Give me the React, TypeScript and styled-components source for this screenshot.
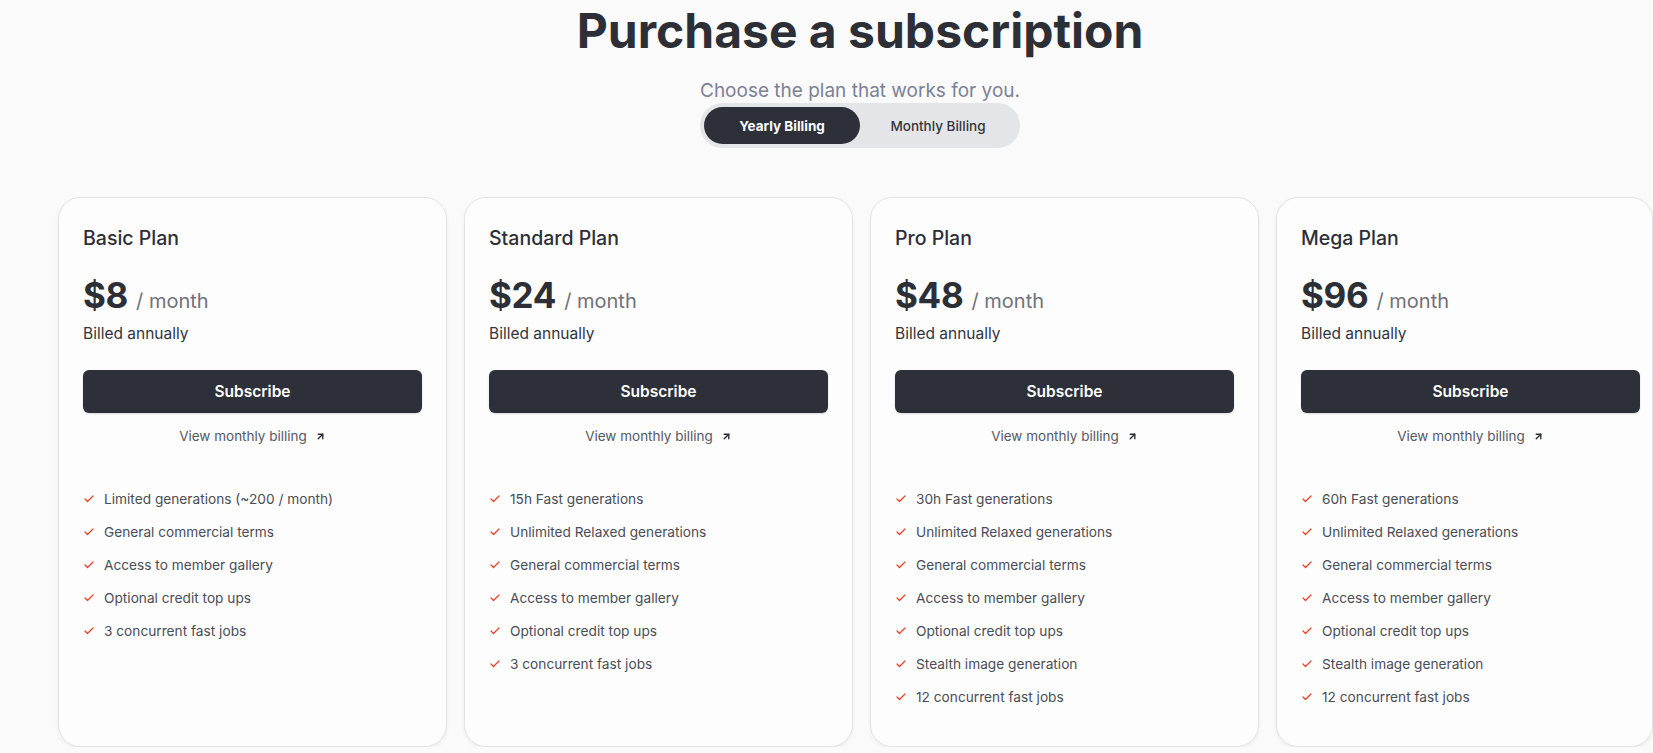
import React from "react";
import styled, { createGlobalStyle } from "styled-components";
import { Check, ArrowUpRight } from "lucide-react";

const GlobalStyle = createGlobalStyle`
  html, body {
    margin: 0;
    padding: 0;
    background: #fafafa;
    overflow: hidden;
  }
  body {
    font-family: Inter, "Noto Sans", "Liberation Sans", sans-serif;
    color: #2d2f36;
  }
  * { box-sizing: border-box; }
`;

const Page = styled.main`
  width: 1604px;
  margin-left: 58px;
  display: flex;
  flex-direction: column;
  align-items: center;
`;

const Title = styled.h1`
  margin: 3px 0 0;
  font-size: 48px;
  line-height: 56px;
  font-weight: 700;
  letter-spacing: 0;
  color: #2d2f36;
`;

const Subtitle = styled.p`
  margin: 20px 0 0;
  font-size: 19px;
  line-height: 24px;
  font-weight: 400;
  color: #7c8196;
`;

const Toggle = styled.div`
  margin-top: 0;
  display: flex;
  padding: 4px;
  width: 320px;
  height: 45px;
  border-radius: 999px;
  background: #e4e5e8;
`;

const ToggleOption = styled.button<{ $active?: boolean }>`
  flex: 1;
  border: 0;
  border-radius: 999px;
  font-family: inherit;
  font-size: 13.5px;
  font-weight: ${(p) => (p.$active ? 700 : 500)};
  color: ${(p) => (p.$active ? "#ffffff" : "#33353c")};
  background: ${(p) => (p.$active ? "#2d3038" : "transparent")};
  cursor: pointer;
`;

const Cards = styled.section`
  align-self: stretch;
  margin-top: 49px;
  display: grid;
  grid-template-columns: 389px 389px 389px 377px;
  column-gap: 17px;
`;

const Card = styled.article`
  height: 550px;
  padding: 28px 0 0 24px;
  border: 1px solid #e3e3e6;
  border-radius: 22px;
  background: #fdfdfd;
  box-shadow: 0 2px 4px rgba(0, 0, 0, 0.05);
  display: flex;
  flex-direction: column;
`;

const PlanName = styled.h2`
  margin: 0;
  font-size: 19.5px;
  line-height: 24px;
  font-weight: 500;
  color: #2d2f36;
`;

const PriceRow = styled.div`
  margin-top: 25px;
  display: flex;
  align-items: baseline;
  gap: 8px;
`;

const Price = styled.span`
  font-size: 35px;
  line-height: 40px;
  font-weight: 700;
  color: #2d2f36;
  letter-spacing: -0.3px;
`;

const Per = styled.span`
  font-size: 20px;
  font-weight: 400;
  color: #717178;
`;

const Billed = styled.div`
  margin-top: 8px;
  font-size: 15.5px;
  line-height: 22px;
  color: #33353c;
`;

const SubscribeButton = styled.button`
  margin-top: 25px;
  width: 339px;
  height: 43px;
  border: 0;
  border-radius: 6px;
  background: #2d3038;
  color: #ffffff;
  font-family: inherit;
  font-size: 15.5px;
  font-weight: 600;
  box-shadow: 0 1px 2px rgba(0, 0, 0, 0.15);
  cursor: pointer;
`;

const MonthlyLink = styled.a`
  width: 339px;
  margin-top: 14px;
  display: flex;
  align-items: center;
  justify-content: center;
  gap: 8px;
  font-size: 13.5px;
  line-height: 18px;
  color: #555962;
  text-decoration: none;
`;

const Features = styled.ul`
  list-style: none;
  margin: 44px 0 0;
  padding: 0;
  display: flex;
  flex-direction: column;
  gap: 13px;
`;

const Feature = styled.li`
  display: flex;
  align-items: center;
  gap: 9px;
  font-size: 13.7px;
  line-height: 20px;
  color: #4a4d55;
`;

const CheckMark = styled(Check)`
  flex: none;
  color: #e5432a;
`;

type Plan = {
  name: string;
  price: string;
  features: string[];
};

const plans: Plan[] = [
  {
    name: "Basic Plan",
    price: "$8",
    features: [
      "Limited generations (~200 / month)",
      "General commercial terms",
      "Access to member gallery",
      "Optional credit top ups",
      "3 concurrent fast jobs",
    ],
  },
  {
    name: "Standard Plan",
    price: "$24",
    features: [
      "15h Fast generations",
      "Unlimited Relaxed generations",
      "General commercial terms",
      "Access to member gallery",
      "Optional credit top ups",
      "3 concurrent fast jobs",
    ],
  },
  {
    name: "Pro Plan",
    price: "$48",
    features: [
      "30h Fast generations",
      "Unlimited Relaxed generations",
      "General commercial terms",
      "Access to member gallery",
      "Optional credit top ups",
      "Stealth image generation",
      "12 concurrent fast jobs",
    ],
  },
  {
    name: "Mega Plan",
    price: "$96",
    features: [
      "60h Fast generations",
      "Unlimited Relaxed generations",
      "General commercial terms",
      "Access to member gallery",
      "Optional credit top ups",
      "Stealth image generation",
      "12 concurrent fast jobs",
    ],
  },
];

export default function App() {
  return (
    <>
      <GlobalStyle />
      <Page>
        <Title>Purchase a subscription</Title>
        <Subtitle>Choose the plan that works for you.</Subtitle>
        <Toggle>
          <ToggleOption $active>Yearly Billing</ToggleOption>
          <ToggleOption>Monthly Billing</ToggleOption>
        </Toggle>
        <Cards>
          {plans.map((plan) => (
            <Card key={plan.name}>
              <PlanName>{plan.name}</PlanName>
              <PriceRow>
                <Price>{plan.price}</Price>
                <Per>/ month</Per>
              </PriceRow>
              <Billed>Billed annually</Billed>
              <SubscribeButton>Subscribe</SubscribeButton>
              <MonthlyLink href="#">
                View monthly billing
                <ArrowUpRight size={11} strokeWidth={3} color="#2d2f36" />
              </MonthlyLink>
              <Features>
                {plan.features.map((f) => (
                  <Feature key={f}>
                    <CheckMark size={12} strokeWidth={2.5} />
                    {f}
                  </Feature>
                ))}
              </Features>
            </Card>
          ))}
        </Cards>
      </Page>
    </>
  );
}
